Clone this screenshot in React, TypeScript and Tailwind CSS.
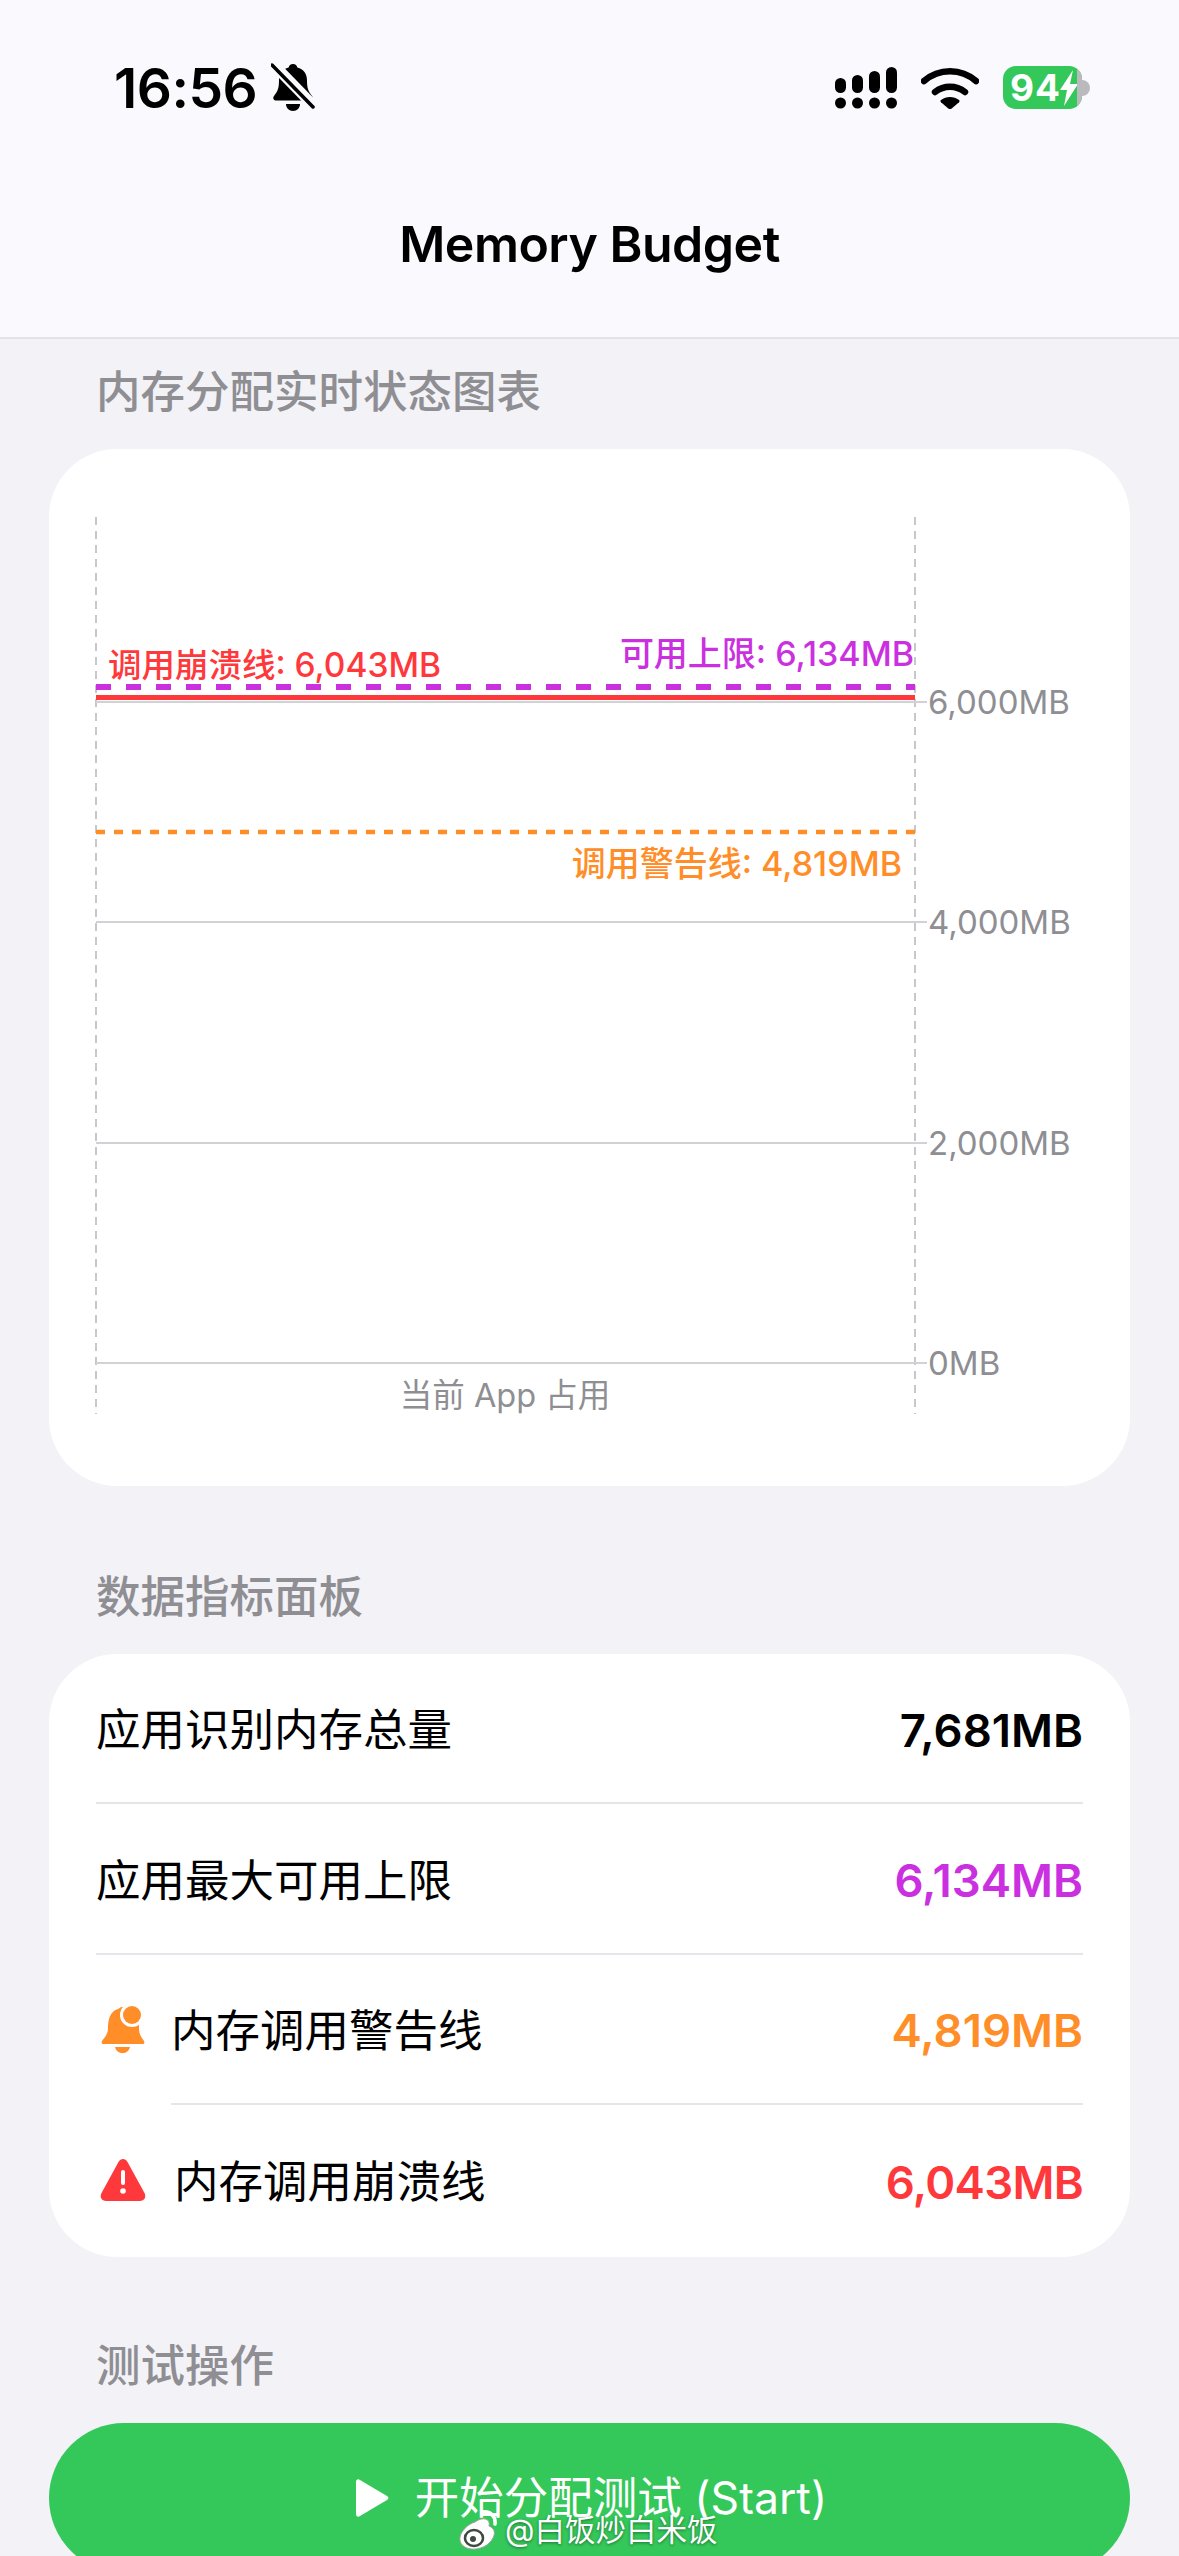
import React from "react";

function MuteBell() {
  return (
    <svg width="44" height="50" viewBox="0 0 44 50" className="block">
      <path d="M22 1c2.500 0 4 1.600 4.400 3.600C32.500 6 36 11 36 17.500c0 8 1.500 11 5 15.500 1.500 2 .5 4.500-2 4.500H5c-2.500 0-3.500-2.500-2-4.500C6.500 28.500 8 25.500 8 17.500 8 11 11.500 6 17.600 4.600 18 2.600 19.500 1 22 1Z" fill="#000" />
      <path d="M15 41h14c0 4-3 7-7 7s-7-3-7-7Z" fill="#000" />
      <path d="M6 1l38 39" stroke="#f9f9fe" strokeWidth="5" />
      <path d="M1 2l41 42" stroke="#f9f9fe" strokeWidth="8" />
      <path d="M1 2l41 42" stroke="#000" strokeWidth="3.500" strokeLinecap="round" />
    </svg>
  );
}

function Signal() {
  const bars = [
    { x: 0, y: 11 },
    { x: 17, y: 8 },
    { x: 34, y: 4 },
    { x: 51, y: 0 },
  ];
  return (
    <svg width="62" height="42" viewBox="0 0 62 42" className="block">
      {bars.map((b) => (
        <g key={b.x}>
          <rect x={b.x} y={b.y} width="11" height={26 - b.y} rx="5.500" fill="#000" />
          <circle cx={b.x + 5.500} cy="36" r="5.500" fill="#000" />
        </g>
      ))}
    </svg>
  );
}

function Wifi() {
  return (
    <svg width="58" height="42" viewBox="0 0 58 42" className="block">
      <path d="M3 14C18 1 40 1 55 14" stroke="#000" strokeWidth="6.500" strokeLinecap="round" fill="none" />
      <path d="M14 25c9-7 21-7 30 0" stroke="#000" strokeWidth="6.500" strokeLinecap="round" fill="none" />
      <path d="M20 33c5-4 13-4 18 0 .8.700.8 1.500 0 2.300l-7 6c-1.200 1-2.800 1-4 0l-7-6c-.8-.8-.8-1.600 0-2.300Z" fill="#000" />
    </svg>
  );
}

function Battery() {
  return (
    <div className="flex items-center">
      <div className="relative flex h-[43px] w-[79px] items-center overflow-hidden rounded-[13px] bg-[#34c759] pl-[7px]">
        <span className="text-[37px] leading-none font-bold tracking-[1px] text-white">94</span>
        <svg width="20" height="36" viewBox="0 0 20 36" className="absolute top-[4px] left-[56px]">
          <path d="M14 0 1 20h7L5 36 19 14h-8L14 0Z" fill="#fff" />
        </svg>
        <div className="absolute top-0 right-0 h-full w-[5px] bg-[#b9b9be]" />
      </div>
      <div className="h-[16px] w-[8px] rounded-r-full bg-[#b9b9be]" />
    </div>
  );
}

function AlertBell() {
  return (
    <svg width="44" height="48" viewBox="0 0 44 48" className="block">
      <path d="M22 1c4 0 4 1 6 2 9 3 10 12 10 19 0 6 2 9 5 13 1 2 0 3-2 3H3c-2 0-3-1-2-3 3-4 6-7 6-13 0-8 2-17 10-19 2-1 2-2 5-2Z" fill="#ff8d28" />
      <path d="M14 41h15c-1 4-4 6-7.500 6S15 45 14 41Z" fill="#ff8d28" />
      <circle cx="31" cy="9" r="12" fill="#fff" />
      <circle cx="31" cy="9" r="9" fill="#ff8d28" />
    </svg>
  );
}

function AlertTriangle() {
  return (
    <svg width="46" height="42" viewBox="0 0 46 42" className="block">
      <path d="M18.500 3c2-4 7-4 9 0l17 31c2 4 0 8-4.500 8H6c-4.500 0-6.500-4-4.500-8l17-31Z" fill="#ff383c" />
      <rect x="21" y="11" width="4" height="15" rx="2" fill="#fff" />
      <circle cx="23" cy="32" r="2.800" fill="#fff" />
    </svg>
  );
}

function SectionTitle({ children, className }: { children: React.ReactNode; className: string }) {
  return (
    <h2 className={`h-[60px] pl-[96px] text-[44.5px] leading-[60px] font-medium text-[#8e8e93] ${className}`}>
      {children}
    </h2>
  );
}

// Memory chart: grid, category guides and threshold lines, in card pixels.
function MemoryChart() {
  const grid = [
    { y: 702, label: "6,000MB" },
    { y: 922, label: "4,000MB" },
    { y: 1143, label: "2,000MB" },
    { y: 1363, label: "0MB" },
  ];
  return (
    <svg viewBox="90 510 1000 910" className="block h-[910px] w-[1000px]">
      {[96, 915].map((x) => (
        <line key={x} x1={x} x2={x} y1="517" y2="1414" stroke="#c7c7cc" strokeWidth="2" strokeDasharray="8 6" />
      ))}
      {grid.map((g) => (
        <g key={g.y}>
          <line x1="96" x2="927" y1={g.y} y2={g.y} stroke="#d1d1d6" strokeWidth="2" />
          <text x="928" y={g.y + 12} fontSize="33" fill="#8e8e93">{g.label}</text>
        </g>
      ))}
      <line x1="96" x2="915" y1="697.500" y2="697.500" stroke="#ff383c" strokeWidth="5" />
      <line x1="96" x2="915" y1="687" y2="687" stroke="#cb30e0" strokeWidth="6" strokeDasharray="15 15" />
      <line x1="96" x2="915" y1="832" y2="832" stroke="#ff8d28" strokeWidth="4.500" strokeDasharray="9 9" />
      <text x="108" y="677" fontSize="33.500" fontWeight="500" fill="#ff383c">调用崩溃线: 6,043MB</text>
      <text x="914" y="666" fontSize="34" fontWeight="500" fill="#cb30e0" textAnchor="end">可用上限: 6,134MB</text>
      <text x="902" y="876" fontSize="34" fontWeight="500" fill="#ff8d28" textAnchor="end">调用警告线: 4,819MB</text>
      <text x="505" y="1407" fontSize="32.500" fill="#8e8e93" textAnchor="middle">当前 App 占用</text>
    </svg>
  );
}

function Row({ label, value, color, icon, textInset, last, inset }: {
  label: string;
  value: string;
  color: string;
  icon?: React.ReactNode;
  textInset?: string;
  last?: boolean;
  inset: string;
}) {
  return (
    <div className={`flex flex-1 items-center pr-[47px] ${inset}`}>
      {icon}
      <div className={`flex h-full flex-1 items-center justify-between pt-[5px] ${textInset ?? ""} ${last ? "" : "border-b-2 border-[#e5e5ea]"}`}>
        <span className="text-[44.5px] leading-none text-black">{label}</span>
        <span className={`text-[45.5px] leading-none font-semibold ${color}`}>{value}</span>
      </div>
    </div>
  );
}

export default function App() {
  return (
    <div className="relative h-[2556px] w-[1179px] overflow-hidden bg-[#f2f2f7] font-['Inter','Noto_Sans_CJK_SC',sans-serif]">
      <header className="h-[339px] border-b-2 border-[#e2e2e7] bg-[#f9f9fe]">
        <div className="flex h-[214px] items-start justify-between pt-[60px] pr-[89px] pl-[114px]">
          <div className="flex items-center gap-[14px]">
            <span className="text-[55px] leading-[56px] font-semibold tracking-[-0.5px] text-black">16:56</span>
            <MuteBell />
          </div>
          <div className="flex items-center gap-[24px] pt-[6px]">
            <Signal />
            <Wifi />
            <Battery />
          </div>
        </div>
        <h1 className="text-center text-[50px] leading-[60px] font-semibold tracking-[-0.5px] text-black">Memory Budget</h1>
      </header>

      <SectionTitle className="mt-[23px]">内存分配实时状态图表</SectionTitle>
      <section className="mx-[49px] mt-[27px] h-[1037px] rounded-[68px] bg-white pt-[61px] pl-[41px]">
        <MemoryChart />
      </section>

      <SectionTitle className="mt-[81px]">数据指标面板</SectionTitle>
      <section className="mx-[49px] mt-[27px] flex h-[603px] flex-col rounded-[68px] bg-white pb-[2px]">
        <Row label="应用识别内存总量" value="7,681MB" color="text-black" inset="pl-[47px]" />
        <Row label="应用最大可用上限" value="6,134MB" color="text-[#cb30e0]" inset="pl-[47px]" />
        <Row
          label="内存调用警告线"
          value="4,819MB"
          color="text-[#ff8d28]"
          icon={<AlertBell />}
          textInset="ml-[26px]"
          inset="pl-[52px]"
        />
        <Row
          label="内存调用崩溃线"
          value="6,043MB"
          color="text-[#ff383c] tracking-[-0.7px]"
          icon={<AlertTriangle />}
          textInset="ml-[28px]"
          inset="pl-[51px]"
          last
        />
      </section>

      <SectionTitle className="mt-[79px]">测试操作</SectionTitle>
      <button className="mx-[49px] mt-[27px] flex h-[150px] w-[1081px] items-center justify-center gap-[26px] rounded-[75px] bg-[#34c759] pl-[3px] text-white">
        <svg width="34" height="38" viewBox="0 0 34 38" className="block">
          <path d="M1 3c0-2.500 2-3.500 4-2l27 16c1.800 1 1.800 3 0 4L5 37c-2 1.500-4 .5-4-2V3Z" fill="#fff" />
        </svg>
        <span className="text-[44.5px] leading-none">开始分配测试 (Start)</span>
      </button>

      {/* Account credit laid over the bottom of the page */}
      <div className="absolute top-[2508px] left-[459px] flex items-center gap-[8px] text-white [text-shadow:0_1px_3px_rgba(0,0,0,0.45)]">
        <svg width="38" height="44" viewBox="0 0 38 44" className="block">
          <path d="M16 14c8-6 16-3 14 4 5 2 7 6 4 12-4 8-14 12-22 11C5 40 0 36 1 29c1-6 8-13 15-15Z" fill="#fff" stroke="#9aa39c" strokeWidth="1" />
          <ellipse cx="15" cy="30" rx="9" ry="8" fill="none" stroke="#3f4a42" strokeWidth="2.500" />
          <circle cx="14" cy="31" r="3" fill="#3f4a42" />
          <path d="M24 4c7-1 13 4 12 12" stroke="#fff" strokeWidth="3.500" fill="none" strokeLinecap="round" />
        </svg>
        <span className="text-[30.5px] leading-none">@白饭炒白米饭</span>
      </div>
    </div>
  );
}
